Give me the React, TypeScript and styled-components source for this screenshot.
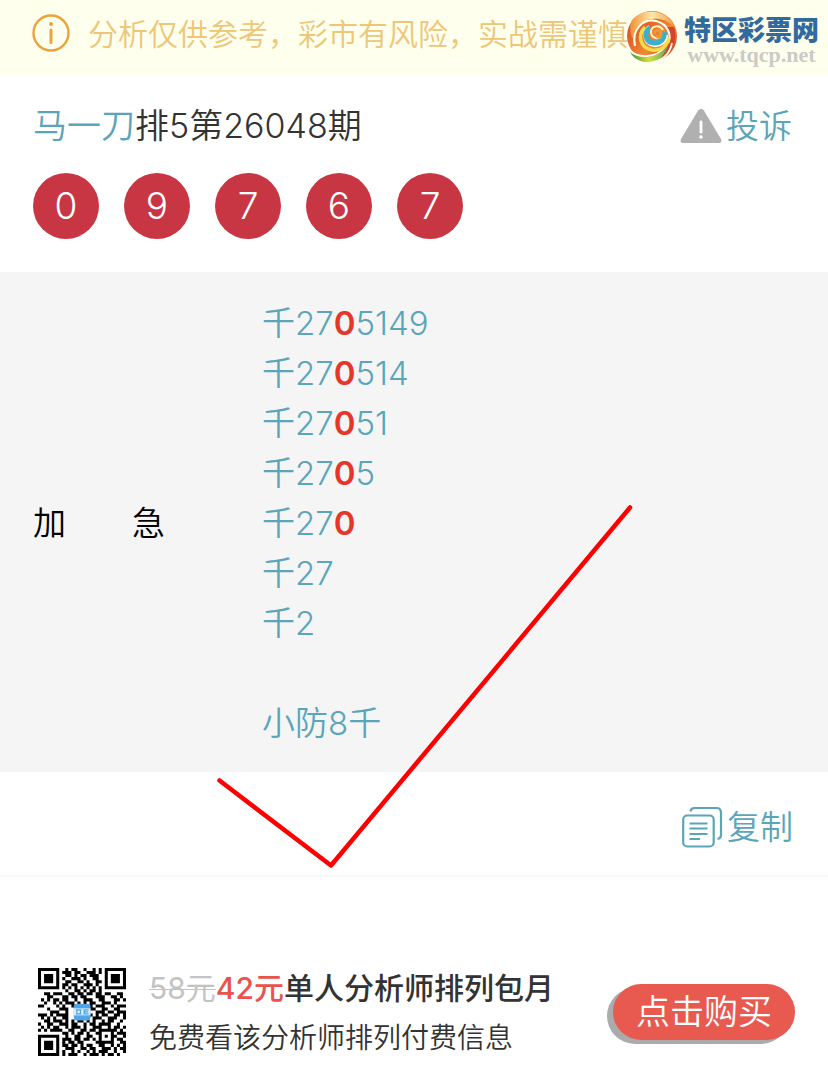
import React from "react";
import styled, { createGlobalStyle } from "styled-components";

const GlobalStyle = createGlobalStyle`
  * { box-sizing: border-box; }
  body {
    margin: 0;
    background: #fff;
    color: #333;
    font-family: Inter, "Noto Sans CJK SC", sans-serif;
    font-size: 33px;
    font-weight: 350;
    line-height: 50px;
  }
`;

const teal = "#5ba5ba";

const Page = styled.main`
  position: relative;
`;

const Notice = styled.header`
  position: relative;
  display: flex;
  align-items: center;
  gap: 18px;
  height: 75px;
  padding: 0 32px 8px;
  overflow: hidden;
  background: #ffffed;
  color: #edc678;
  font-size: 30px;
  white-space: nowrap;
`;

const NoticeText = styled.p`
  margin: 0;
`;

const SiteMark = styled.a`
  position: absolute;
  top: 9px;
  right: 9px;
  display: flex;
  align-items: center;
  gap: 6px;
  color: #336a9e;
  text-decoration: none;
`;

const SiteWords = styled.span`
  display: flex;
  flex-direction: column;
  align-items: center;
  padding-top: 8px;
`;

const SiteName = styled.strong`
  font-size: 27px;
  font-weight: 900;
  line-height: 28px;
`;

const SiteHost = styled.span`
  color: #cbcbc8;
  font-family: "Liberation Serif", serif;
  font-size: 22px;
  font-weight: 700;
  line-height: 20px;
`;

const Draw = styled.section`
  padding: 26px 33px 33px;
`;

const DrawHead = styled.div`
  display: flex;
  justify-content: space-between;
  align-items: center;
`;

const Title = styled.h1`
  margin: 0;
  font-size: 34px;
  font-weight: 350;
`;

const Author = styled.a`
  color: ${teal};
  text-decoration: none;
`;

const IconButton = styled.button`
  display: flex;
  align-items: center;
  gap: 4px;
  padding: 0 3px 0 0;
  border: 0;
  background: none;
  color: ${teal};
  font: inherit;
`;

const Balls = styled.ol`
  display: flex;
  gap: 25px;
  margin: 22px 0 0;
  padding: 0;
  list-style: none;
`;

const Ball = styled.li`
  width: 66px;
  height: 66px;
  border-radius: 50%;
  background: #c83643;
  color: #fff;
  font-size: 37px;
  line-height: 66px;
  text-align: center;
`;

const Picks = styled.section`
  display: grid;
  grid-template-columns: 229px 1fr;
  align-items: center;
  padding: 26px 33px 24px;
  background: #f5f5f5;
`;

const PickLabel = styled.h2`
  margin: 0;
  color: #000;
  font-size: 33px;
  font-weight: 350;
  white-space: pre;
`;

const PickList = styled.div`
  color: ${teal};
`;

const PickLine = styled.p`
  min-height: 50px;
  margin: 0;
`;

const Hit = styled.b`
  color: #e6352b;
  font-weight: 600;
`;

const Actions = styled.div`
  display: flex;
  justify-content: flex-end;
  align-items: center;
  height: 105px;
  padding: 7px 32px 0;
  border-bottom: 2px solid #f8f8f8;
`;

const Promo = styled.section`
  display: flex;
  align-items: center;
  padding: 84px 33px 28px 38px;
`;

const PromoText = styled.div`
  flex: 1;
  margin-left: 23px;
  padding-top: 2px;
  white-space: nowrap;
`;

const Offer = styled.p`
  margin: 0;
  font-size: 30px;
  font-weight: 500;
`;

const OldPrice = styled.s`
  color: #c3c3c3;
  font-weight: 400;
  text-decoration-thickness: 1px;
`;

const Price = styled.strong`
  color: #e9524d;
  font-weight: 500;
`;

const Detail = styled.p`
  margin: 0;
  font-size: 28px;
`;

const Buy = styled.button`
  width: 182px;
  height: 56px;
  padding: 0;
  border: 0;
  border-radius: 28px;
  background: #e85a50;
  box-shadow: -6px 4px 0 #aaabad;
  color: #fff;
  font: inherit;
  font-size: 34px;
  line-height: 56px;
`;

const Tick = styled.svg`
  position: absolute;
  left: 215px;
  top: 503px;
  pointer-events: none;
`;

const InfoIcon = () => (
  <svg width="38" height="40" viewBox="0 0 38 40" fill="none" stroke="#eda33c" aria-hidden="true">
    <circle cx="19" cy="19" r="17.5" strokeWidth="2.4" />
    <path d="M19 16v12.500" strokeWidth="3" strokeLinecap="round" />
    <circle cx="19" cy="10" r="2" fill="#eda33c" stroke="none" />
  </svg>
);

const WarnIcon = () => (
  <svg width="42" height="36" viewBox="0 0 42 36" aria-hidden="true">
    <path d="M18.300 2.200Q21-.8 23.700 2.200L41 31Q42.500 35 38.500 35H3.500Q-.5 35 1 31Z" fill="#b0b0b0" />
    <path d="M21 14v10" stroke="#fff" strokeWidth="2.800" strokeLinecap="round" />
    <circle cx="21" cy="29" r="1.700" fill="#fff" />
  </svg>
);

const CopyIcon = () => (
  <svg width="41" height="42" viewBox="0 0 41 42" fill="none" stroke={teal} strokeWidth="2.200" aria-hidden="true">
    <rect x="1.200" y="9.500" width="30.500" height="31" rx="4" />
    <path d="M8.500 5.500Q9 2 12.500 2H34.500Q39 2 39 6.500V29Q39 32.500 35.500 33" />
    <path d="M7.500 17.500H25.500M7.500 22.500H25.500M7.500 28H25.500M7.500 33H18" />
  </svg>
);

const Swirl = () => (
  <svg width="53" height="54" viewBox="0 0 53 54" fill="none" aria-hidden="true">
    <defs>
      <linearGradient id="warm" x1="0" y1="0" x2="1" y2="1">
        <stop offset="0" stopColor="#c9502a" />
        <stop offset=".35" stopColor="#e2662a" />
        <stop offset=".6" stopColor="#f08a35" />
        <stop offset="1" stopColor="#c3301f" />
      </linearGradient>
      <linearGradient id="gold" x1="0" y1="0" x2="1" y2="0">
        <stop offset="0" stopColor="#f0923a" />
        <stop offset=".5" stopColor="#fce9a8" />
        <stop offset="1" stopColor="#f0a04a" />
      </linearGradient>
      <linearGradient id="leaf" x1="0" y1="0" x2="1" y2="0">
        <stop offset="0" stopColor="#2f8f3f" />
        <stop offset=".45" stopColor="#d9dc3c" />
        <stop offset="1" stopColor="#3aa866" />
      </linearGradient>
    </defs>
    <circle cx="27" cy="26" r="25" fill="url(#warm)" />
    <path d="M7 10C18-3 42-1 49 16 39 7 23 6 14 15 10 19 8 24 8 29 5 23 4 16 7 10Z" fill="url(#gold)" />
    <path d="M5 42C16 50 30 48 40 39 44 35 46 30 46 25 49 38 43 51 26 52 16 53 9 49 5 42Z" fill="url(#leaf)" />
    <path d="M49 17C53 30 47 44 33 51 44 40 47 28 41 17Z" fill="#d5432a" />
    <path d="M10 36C6 20 18 8 31 11 43 14 47 25 43 33" stroke="#fffdec" strokeWidth="2.200" />
    <path d="M4 40C14 49 31 48 40 37M24 53C37 51 45 44 47 33" stroke="#fffdec" strokeWidth="1.800" />
    <path d="M20 17C12 25 15 38 27 40 36 41 42 36 44 28" stroke="#f7dc4a" strokeWidth="3.500" />
    <path d="M24 16C16 22 18 35 29 36 36 37 42 32 42 25" stroke="#fff8cf" strokeWidth="2" />
    <path d="M25 18C18 22 20 33 30 33 36 33 40 28 39 22" stroke="#35b2d0" strokeWidth="5" />
    <path d="M38 20C34 14 26 16 26 22 26 28 33 30 36 26" stroke="#fff3c4" strokeWidth="2" />
    <path d="M29 24C29 19 36 19 36 24 36 28 31 28 32 25" stroke="#f09a2c" strokeWidth="3" />
  </svg>
);

const modules = [
  "11111110010110010010101111111",
  "10000010111011001110101000001",
  "10111010011010110111001011101",
  "10111010100111010011001011101",
  "10111010011001101001101011101",
  "10000010110110011101001000001",
  "11111110101010101010101111111",
  "00000000010011010110100000000",
  "00110111001101101101101100110",
  "00011000110110110001110011010",
  "01010110110010011100110001101",
  "00100101011101010110011101000",
  "11000010100110010101110010111",
  "00010001110000000110011001100",
  "00001110010000000001110110111",
  "11101011110000000101011001101",
  "01010100110000000011100111001",
  "00110111010101101010010110010",
  "10011001110110010110111100100",
  "01010110010111010011100101101",
  "10101111001100110110111111010",
  "00000000110101101001100010111",
  "11111110010011001100101011001",
  "10000010111011011010100010110",
  "10111010101101100001111110011",
  "10111010110110101100110010101",
  "10111010011100110110011101011",
  "10000010100101001010111001001",
  "11111110101110010111010110100",
];

const QrCode = () => (
  <svg width="88" height="88" viewBox="0 0 29 29" role="img" aria-label="m.tqcp.net">
    <path
      d={modules
        .flatMap((row, y) => [...row].map((m, x) => (m === "1" ? `M${x} ${y}h1v1h-1z` : "")))
        .join("")}
    />
    <rect x="11.800" y="11.800" width="5.500" height="5.500" rx=".8" fill="#4fa6e6" />
    <rect x="11.800" y="13.300" width="5.500" height="2.300" fill="#d9edfb" />
    <path d="M12.500 13.800h1.800M12.500 15.100h1.800M12.800 13.600v1.700M14 13.600v1.700M16.700 13.800h-1.500v1.300h1.500M15.200 14.450h1.300" fill="none" stroke="#4fa6e6" strokeWidth=".4" />
  </svg>
);

const draw = ["0", "9", "7", "6", "7"];
const tails = ["5149", "514", "51", "5", ""];

export default function App() {
  return (
    <Page>
      <GlobalStyle />
      <Notice>
        <InfoIcon />
        <NoticeText>分析仅供参考，彩市有风险，实战需谨慎。</NoticeText>
        <SiteMark href="#home">
          <Swirl />
          <SiteWords>
            <SiteName>特区彩票网</SiteName>
            <SiteHost>www.tqcp.net</SiteHost>
          </SiteWords>
        </SiteMark>
      </Notice>

      <Draw>
        <DrawHead>
          <Title>
            <Author href="#author">马一刀</Author>排5第26048期
          </Title>
          <IconButton type="button">
            <WarnIcon />
            投诉
          </IconButton>
        </DrawHead>
        <Balls>
          {draw.map((n, i) => (
            <Ball key={i}>{n}</Ball>
          ))}
        </Balls>
      </Draw>

      <Picks>
        <PickLabel>加　　急</PickLabel>
        <PickList>
          {tails.map((tail) => (
            <PickLine key={tail}>
              千27<Hit>0</Hit>
              {tail}
            </PickLine>
          ))}
          <PickLine>千27</PickLine>
          <PickLine>千2</PickLine>
          <PickLine />
          <PickLine>小防8千</PickLine>
        </PickList>
      </Picks>

      <Actions>
        <IconButton type="button">
          <CopyIcon />
          复制
        </IconButton>
      </Actions>

      <Promo>
        <QrCode />
        <PromoText>
          <Offer>
            <OldPrice>58元</OldPrice>
            <Price>42元</Price>单人分析师排列包月
          </Offer>
          <Detail>免费看该分析师排列付费信息</Detail>
        </PromoText>
        <Buy type="button">点击购买</Buy>
      </Promo>

      <Tick width="420" height="368" viewBox="0 0 420 368" fill="none" aria-hidden="true">
        <path d="M4.500 277.500 116 362.500 415 4.500" stroke="#f00" strokeWidth="4.500" strokeLinecap="round" strokeLinejoin="round" />
      </Tick>
    </Page>
  );
}
